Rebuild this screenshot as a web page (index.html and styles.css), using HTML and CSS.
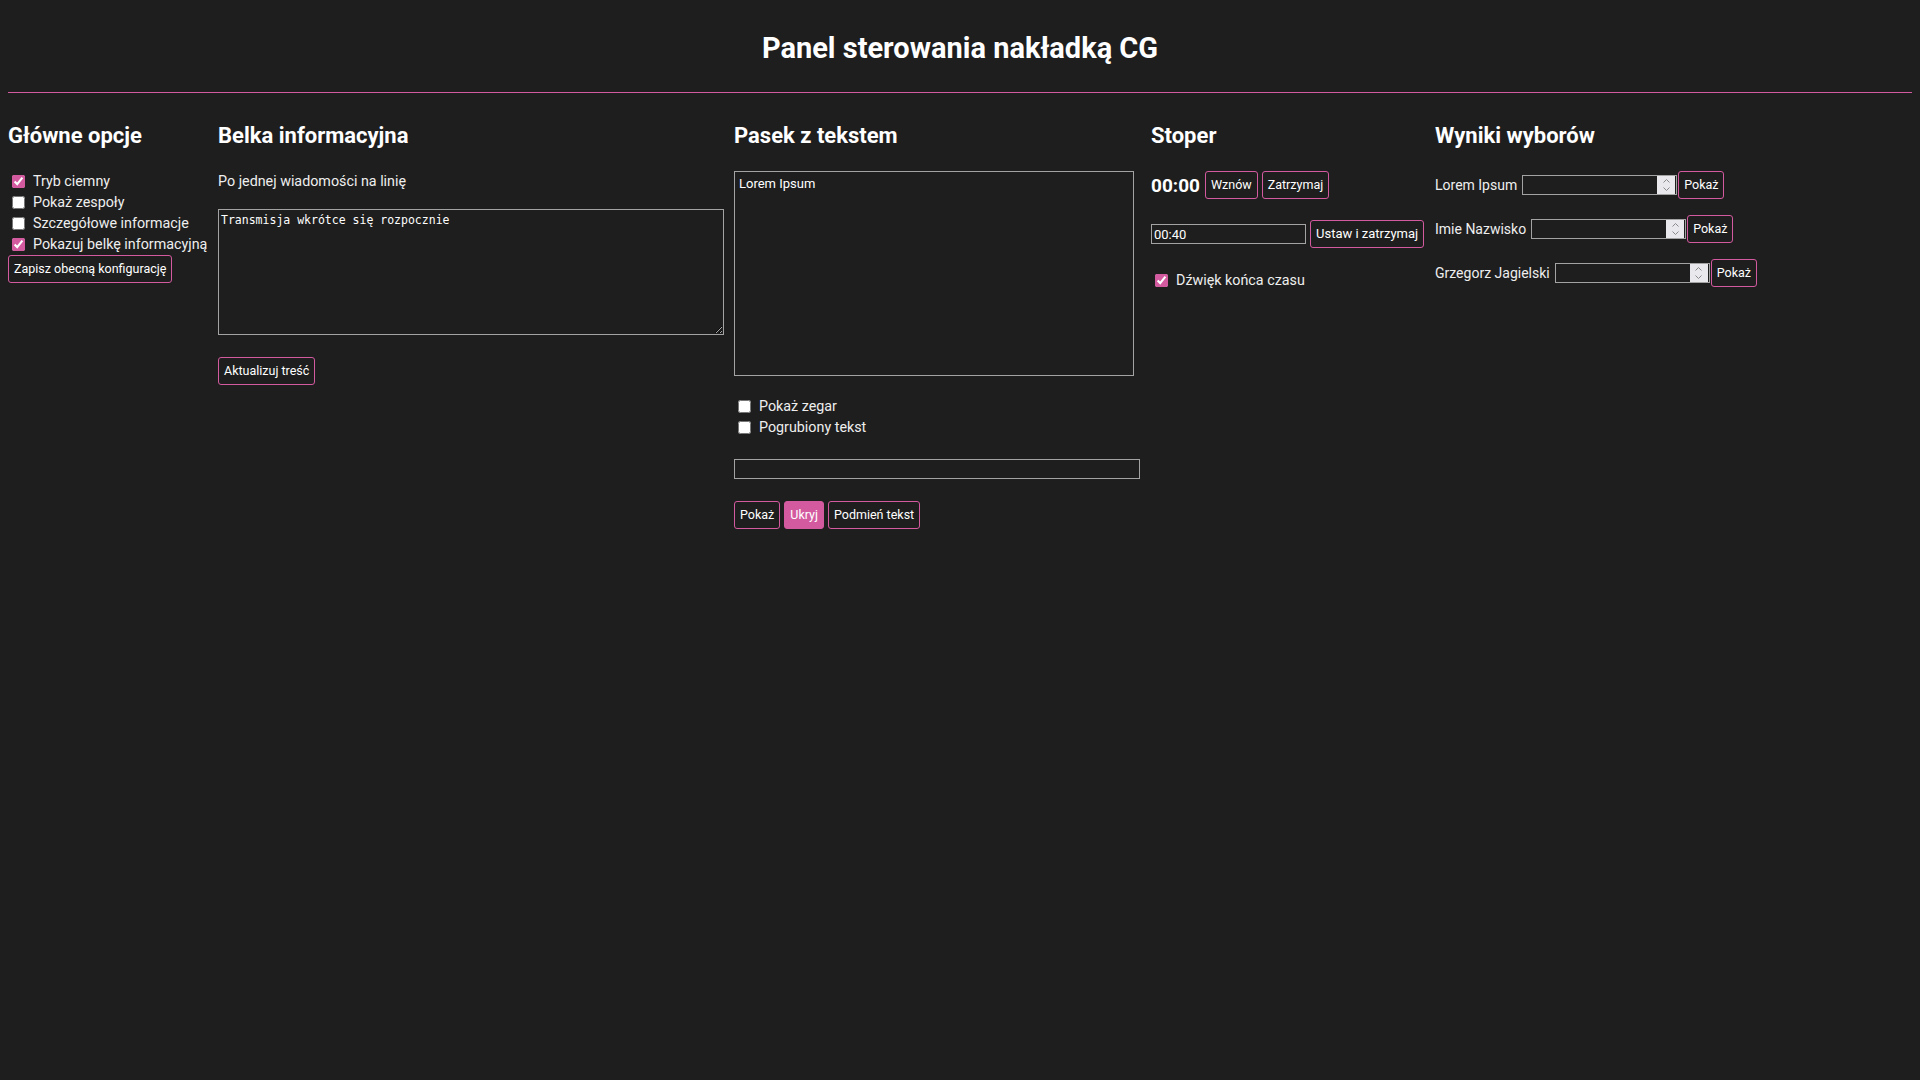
FILE: index.html
```html
<!DOCTYPE html>
<html lang="pl">
<head>
<meta charset="utf-8">
<title>Panel sterowania nakładką CG</title>
<link rel="stylesheet" href="styles.css">
</head>
<body>
<header class="top">
  <h1 class="title">Panel sterowania nakładką CG</h1>
</header>
<hr class="rule">
<main class="panels">
  <section class="col col-main">
    <h2 class="col-title">Główne opcje</h2>
    <div class="check-list">
      <label class="check"><input type="checkbox" checked><span>Tryb ciemny</span></label>
      <label class="check"><input type="checkbox"><span>Pokaż zespoły</span></label>
      <label class="check"><input type="checkbox"><span>Szczegółowe informacje</span></label>
      <label class="check"><input type="checkbox" checked><span>Pokazuj belkę informacyjną</span></label>
    </div>
    <div class="save-row"><button class="btn">Zapisz obecną konfigurację</button></div>
  </section>

  <section class="col col-info">
    <h2 class="col-title">Belka informacyjna</h2>
    <p class="hint">Po jednej wiadomości na linię</p>
    <textarea class="area area-mono">Transmisja wkrótce się rozpocznie</textarea>
    <div class="info-actions"><button class="btn">Aktualizuj treść</button></div>
  </section>

  <section class="col col-strip">
    <h2 class="col-title">Pasek z tekstem</h2>
    <textarea class="area area-strip">Lorem Ipsum</textarea>
    <div class="check-list strip-checks">
      <label class="check"><input type="checkbox"><span>Pokaż zegar</span></label>
      <label class="check"><input type="checkbox"><span>Pogrubiony tekst</span></label>
    </div>
    <input class="field field-wide" type="text">
    <div class="btn-row strip-actions">
      <button class="btn">Pokaż</button>
      <button class="btn btn-fill">Ukryj</button>
      <button class="btn">Podmień tekst</button>
    </div>
  </section>

  <section class="col col-timer">
    <h2 class="col-title">Stoper</h2>
    <div class="btn-row timer-row">
      <span class="clock">00:00</span>
      <button class="btn">Wznów</button>
      <button class="btn">Zatrzymaj</button>
    </div>
    <div class="btn-row set-row">
      <input class="field field-time" type="text" value="00:40">
      <button class="btn btn-wide">Ustaw i zatrzymaj</button>
    </div>
    <label class="check sound-check"><input type="checkbox" checked><span>Dźwięk końca czasu</span></label>
  </section>

  <section class="col col-votes">
    <h2 class="col-title">Wyniki wyborów</h2>
    <div class="vote-list">
      <div class="vote-row">
        <span class="vote-name">Lorem Ipsum</span>
        <span class="num"><input class="num-field" type="text"><span class="spin"><svg width="9" height="14" viewBox="0 0 9 14"><path d="M1.5 4.5 L4.5 1.5 L7.5 4.5 M1.5 9.5 L4.5 12.5 L7.5 9.5" fill="none" stroke="#8a8a8a" stroke-width="1"/></svg></span></span>
        <button class="btn">Pokaż</button>
      </div>
      <div class="vote-row">
        <span class="vote-name">Imie Nazwisko</span>
        <span class="num"><input class="num-field" type="text"><span class="spin"><svg width="9" height="14" viewBox="0 0 9 14"><path d="M1.5 4.5 L4.5 1.5 L7.5 4.5 M1.5 9.5 L4.5 12.5 L7.5 9.5" fill="none" stroke="#8a8a8a" stroke-width="1"/></svg></span></span>
        <button class="btn">Pokaż</button>
      </div>
      <div class="vote-row">
        <span class="vote-name">Grzegorz Jagielski</span>
        <span class="num"><input class="num-field" type="text"><span class="spin"><svg width="9" height="14" viewBox="0 0 9 14"><path d="M1.5 4.5 L4.5 1.5 L7.5 4.5 M1.5 9.5 L4.5 12.5 L7.5 9.5" fill="none" stroke="#8a8a8a" stroke-width="1"/></svg></span></span>
        <button class="btn">Pokaż</button>
      </div>
    </div>
  </section>
</main>
</body>
</html>
```

FILE: styles.css
```css
* { box-sizing: border-box; }

html, body {
  background: #1e1e1e;
}

body {
  margin: 0;
  padding: 8px;
  color: #eeeeee;
  font-family: Roboto, "Noto Sans", sans-serif;
  font-size: 14.3px;
  min-height: 1080px;
}

.top {
  padding-top: 23px;
}

.title {
  margin: 0;
  text-align: center;
  font-size: 29px;
  line-height: 34px;
  font-weight: 700;
  color: #ffffff;
}

.rule {
  margin: 27px 0 0 0;
  border: 0;
  border-top: 1px solid #d45aa0;
  height: 0;
}

.panels {
  display: flex;
  align-items: flex-start;
  gap: 10px;
  margin-top: 30px;
}

.col {
  display: flex;
  flex-direction: column;
  align-items: flex-start;
  flex: none;
}

.col-main { width: 200px; }
.col-info { width: 506px; }
.col-strip { width: 407px; }
.col-timer { width: 274px; }
.col-votes { width: 400px; }

.col-title {
  margin: 0 0 22px 0;
  font-size: 22px;
  line-height: 26px;
  font-weight: 700;
  color: #ffffff;
  white-space: nowrap;
}

.check-list {
  display: flex;
  flex-direction: column;
}

.check {
  display: flex;
  align-items: center;
  height: 21px;
  white-space: nowrap;
  line-height: 21px;
}

.check input {
  width: 13px;
  height: 13px;
  margin: 0 8px 0 4px;
  accent-color: #d45aa0;
}

.save-row {
  margin-top: 0;
}

.btn {
  font-family: Roboto, "Noto Sans", sans-serif;
  font-size: 12.5px;
  line-height: 16px;
  color: #ffffff;
  background: #1e1e1e;
  border: 1px solid #d45aa0;
  border-radius: 3px;
  padding: 5px 5px;
  height: 28px;
  white-space: nowrap;
  cursor: pointer;
}

.btn-wide {
  font-size: 13px;
}

.btn-fill {
  background: #d45aa0;
}

.hint {
  margin: 0;
  line-height: 21px;
}

.area {
  display: block;
  background: transparent;
  color: #ffffff;
  border: 1px solid #a3a3a3;
  border-radius: 0;
  outline: none;
}

.area-mono {
  margin-top: 17px;
  width: 506px;
  height: 126px;
  padding: 3px 2px 2px;
  font-family: "DejaVu Sans Mono", "Liberation Mono", monospace;
  font-size: 11.5px;
  line-height: 14px;
}

.info-actions {
  margin-top: 22px;
}

.area-strip {
  width: 400px;
  height: 205px;
  padding: 4px;
  font-family: Roboto, "Noto Sans", sans-serif;
  font-size: 13px;
  line-height: 16px;
  resize: none;
}

.strip-checks {
  margin-top: 20px;
}

.field {
  display: block;
  height: 20px;
  background: transparent;
  color: #ffffff;
  border: 1px solid #a3a3a3;
  border-radius: 0;
  padding: 1px 2px;
  font-family: Roboto, "Noto Sans", sans-serif;
  font-size: 13px;
  outline: none;
}

.field-wide {
  width: 406px;
  margin-top: 21px;
}

.btn-row {
  display: flex;
  align-items: center;
  gap: 4px;
}

.strip-actions {
  margin-top: 22px;
}

.clock {
  font-size: 19px;
  font-weight: 700;
  color: #ffffff;
  margin-right: 1px;
}

.set-row {
  margin-top: 21px;
}

.field-time {
  width: 155px;
}

.sound-check {
  margin-top: 22px;
}

.vote-list {
  display: flex;
  flex-direction: column;
  gap: 16px;
}

.vote-row {
  display: flex;
  align-items: center;
  height: 28px;
}

.vote-name {
  white-space: nowrap;
  margin-right: 5px;
  font-size: 14px;
}

.num {
  display: flex;
  align-items: stretch;
  width: 155px;
  height: 20px;
  border: 1px solid #a3a3a3;
  margin-right: 1px;
}

.num-field {
  flex: 1;
  min-width: 0;
  background: transparent;
  border: 0;
  outline: none;
  color: #ffffff;
  padding: 0 2px;
}

.spin {
  display: flex;
  align-items: center;
  justify-content: center;
  width: 18px;
  background: #e9e9ed;
  margin-right: 1px;
}
```
